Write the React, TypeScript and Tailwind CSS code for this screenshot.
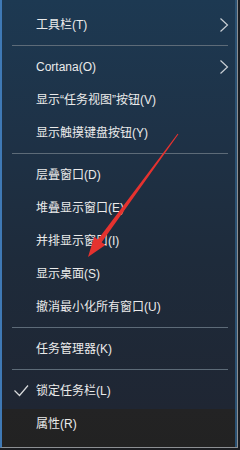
type Item = { label: string; sub?: boolean; checked?: boolean };

const groups: Item[][] = [
  [{ label: "工具栏(T)", sub: true }],
  [
    { label: "Cortana(O)", sub: true },
    { label: "显示“任务视图”按钮(V)" },
    { label: "显示触摸键盘按钮(Y)" },
  ],
  [
    { label: "层叠窗口(D)" },
    { label: "堆叠显示窗口(E)" },
    { label: "并排显示窗口(I)" },
    { label: "显示桌面(S)" },
    { label: "撤消最小化所有窗口(U)" },
  ],
  [{ label: "任务管理器(K)" }],
  [{ label: "锁定任务栏(L)", checked: true }, { label: "属性(R)" }],
];

export default function App() {
  return (
    <div className="relative w-[240px] h-[450px] bg-[#1b1d21] overflow-hidden">
      <div
        className="w-[238px] h-[448px] border-l-2 border-l-[#3f79b5] border-r border-r-[#8c8f93] border-b border-b-[#8c8f93] shadow-[inset_-2px_0_#2b5273] bg-[linear-gradient(180deg,#1d3952_0px,#1e3247_130px,#1e2b3b_260px,#1f2633_409px,#232324_409px,#222222_448px)] pt-[8px] text-[12px] text-[#ebebeb]"
        style={{ fontFamily: '"Liberation Sans", "Noto Sans CJK SC", sans-serif' }}
      >
        {groups.map((g, gi) => (
          <div key={gi}>
            {gi > 0 && (
              <div className="h-[9px] flex items-center pl-[10px] pr-[9px]">
                <div className="h-px w-full bg-[#5d6b78]" />
              </div>
            )}
            {g.map((it) => (
              <Row key={it.label} item={it} />
            ))}
          </div>
        ))}
      </div>
      {/* 红色箭头 */}
      <svg className="absolute left-0 top-0" width="240" height="450" viewBox="0 0 240 450">
        <polygon
          points="177.6,133.7 97.9,239.5 94.2,236.8 88,257 105.4,245 101.7,242.3 178.4,134.3"
          fill="#e5322f"
        />
      </svg>
    </div>
  );
}

function Row({ item }: { item: Item }) {
  return (
    <div className="relative h-[33px] flex items-center pl-[34px] leading-none">
      {item.checked && (
        <svg className="absolute left-[11px] top-[10px]" width="16" height="13" viewBox="0 0 16 13">
          <polyline points="1.5,6.5 6.5,11.5 15,1.5" fill="none" stroke="#d8dadc" strokeWidth="1.2" />
        </svg>
      )}
      <span>{item.label}</span>
      {item.sub && (
        <svg className="absolute left-[216px] top-[10px]" width="12" height="14" viewBox="0 0 12 14">
          <polyline points="2.5,0.5 9.5,7 2.5,13.5" fill="none" stroke="#c9cfd5" strokeWidth="1.2" />
        </svg>
      )}
    </div>
  );
}
